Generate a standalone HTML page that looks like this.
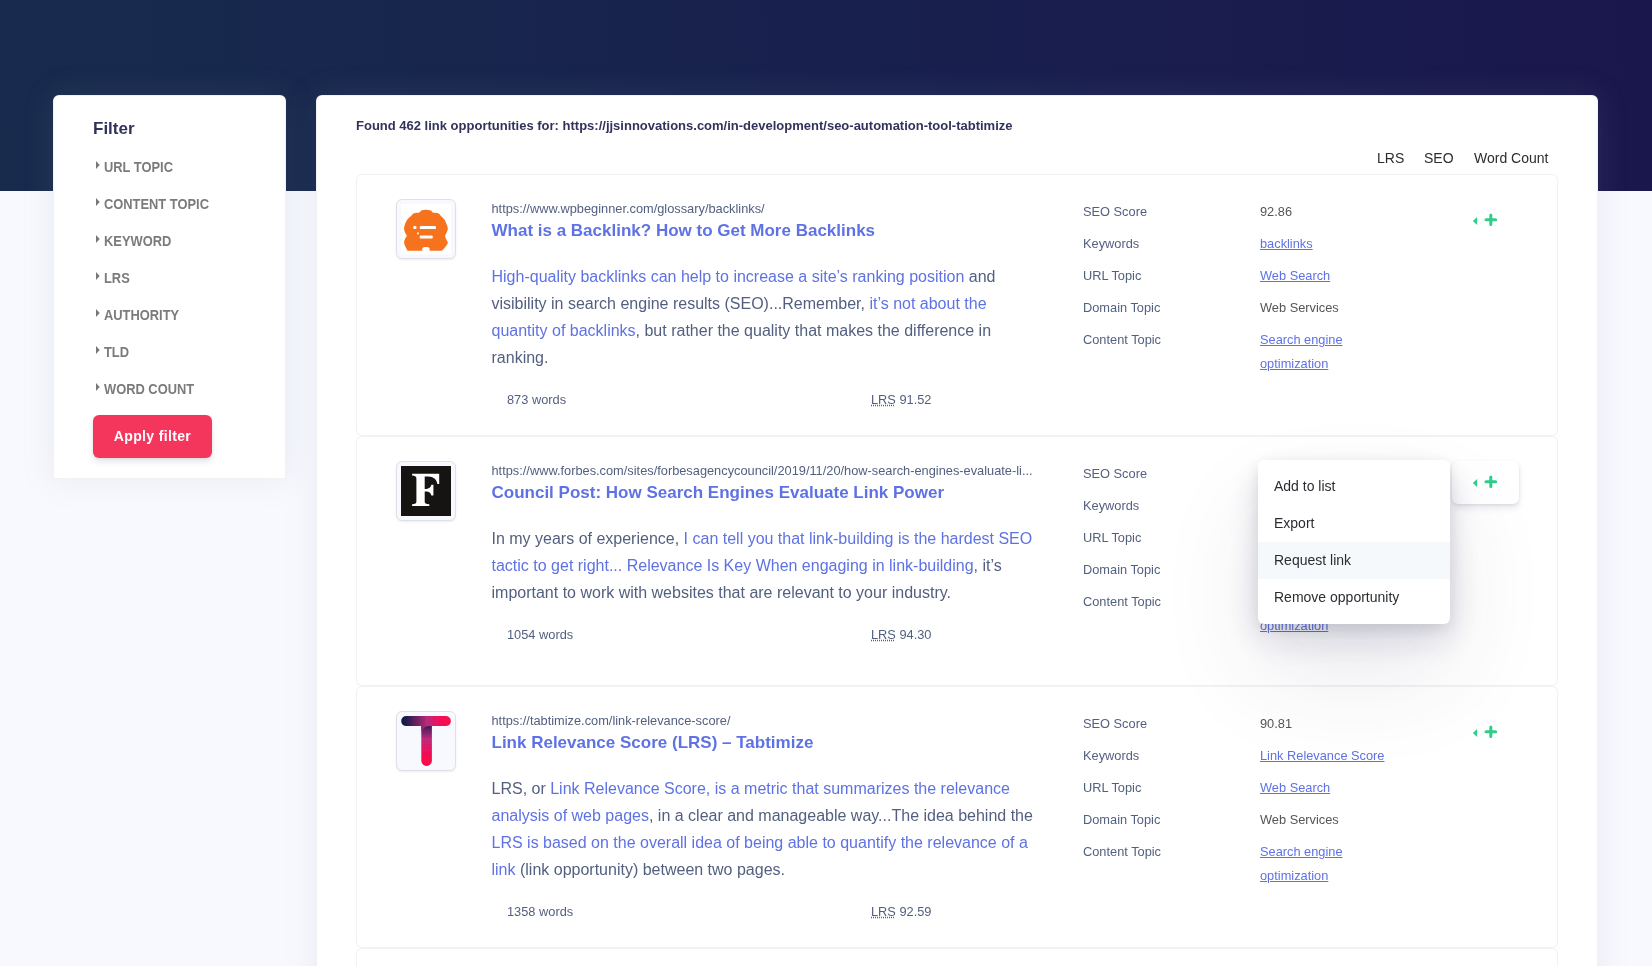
<!DOCTYPE html>
<html lang="en">
<head>
<meta charset="utf-8">
<title>Link opportunities</title>
<style>
*{box-sizing:border-box;margin:0;padding:0}
html,body{width:1652px;height:966px;overflow:hidden}
body{font-family:"Liberation Sans",sans-serif;background:#f8f9fe;color:#525f7f;position:relative;font-size:16px}
a{color:#5e72e4;text-decoration:none}
#wrap{position:absolute;left:0;top:0;width:1652px;height:966px;overflow:hidden;will-change:transform}
.abs{position:absolute}
#hdr{position:absolute;left:0;top:0;width:1652px;height:191px;background:linear-gradient(87deg,#172b4d 0,#1a174d 100%)}
.card{position:absolute;background:#fff;border-radius:6px;box-shadow:inset 0 0 0 1px rgba(0,0,0,.05),0 0 32px 0 rgba(136,152,170,.15)}
#filter{left:53px;top:95px;width:233px;height:384px;border-radius:6px 6px 0 0}
#main{left:316px;top:95px;width:1282px;height:900px}
#ftitle{left:40px;top:24px;font-size:17px;font-weight:bold;color:#32325d;line-height:20px;white-space:nowrap}
.fi{position:absolute;left:43px;height:20px;line-height:20px;font-size:14px;font-weight:bold;color:#7b7b7b;white-space:nowrap;padding-left:8.7px;transform:scaleX(.92);transform-origin:0 0}
.fi:before{content:"";position:absolute;left:0;top:4px;border-left:4px solid #777;border-top:4px solid transparent;border-bottom:4px solid transparent}
#apply{left:40px;top:320px;width:119px;height:43px;border-radius:6px;background:#f5365c;color:#fff;font-weight:bold;font-size:14px;letter-spacing:.35px;line-height:43px;text-align:center;box-shadow:0 4px 6px rgba(50,50,93,.11),0 1px 3px rgba(0,0,0,.08)}
#found{left:40px;top:21px;font-size:13px;font-weight:bold;color:#32325d;line-height:20px;white-space:nowrap}
.sort{position:absolute;top:53px;font-size:14px;color:#2a2d31;line-height:20px;white-space:nowrap}
/* result rows */
.row{position:absolute;left:40px;width:1202px;background:#fff;border:1px solid rgba(0,0,0,.05);border-radius:6px}
.ico{position:absolute;left:39px;top:24px;width:60px;height:60px;border:1px solid #dee2e6;border-radius:6px;background:#f8f9fe;padding:4px;box-shadow:0 1px 2px rgba(0,0,0,.075)}
.ico .in{width:50px;height:50px;position:relative;overflow:hidden}
.url{position:absolute;left:134.5px;top:25px;font-size:12.8px;line-height:18px;color:#525f7f;white-space:nowrap}
.ttl{position:absolute;left:134.5px;top:44px;font-size:17px;line-height:24px;font-weight:bold;color:#5e72e4;white-space:nowrap}
.par{position:absolute;left:134.5px;top:88px;font-size:16px;line-height:27px;color:#525f7f;white-space:nowrap}
.par b{font-weight:normal;color:#5e72e4}
.wc{position:absolute;left:150px;font-size:12.8px;line-height:18px;color:#525f7f;white-space:nowrap}
.lrs{position:absolute;left:514px;font-size:12.8px;line-height:18px;color:#525f7f;white-space:nowrap}
.lrs u{text-decoration:underline dotted;text-underline-offset:1px}
.lab{position:absolute;left:726px;font-size:12.8px;line-height:20px;color:#525f7f;white-space:nowrap}
.val{position:absolute;left:903px;font-size:12.8px;line-height:24px;color:#555;white-space:nowrap}
.val a{text-decoration:underline}
.btn{position:absolute;left:1095px;top:24px;width:67px;height:43px;border-radius:6px}
.btn svg{position:absolute;left:0;top:0}
.btn.on{background:#fff;box-shadow:0 4px 6px rgba(50,50,93,.11),0 1px 3px rgba(0,0,0,.08)}
#dd{position:absolute;left:942px;top:365px;width:192px;height:164px;background:#fff;border-radius:6px;padding:8px 0;box-shadow:0 50px 100px rgba(50,50,93,.1),0 15px 35px rgba(50,50,93,.15),0 5px 15px rgba(0,0,0,.1);z-index:5}
#dd div{height:37px;line-height:37px;padding-left:16px;font-size:14px;color:#2a2d31;white-space:nowrap}
#dd div.hv{background:#f6f9fc}
</style>
</head>
<body>
<div id="wrap">
<div id="hdr"></div>

<div class="card" id="filter">
  <div class="abs" id="ftitle">Filter</div>
  <div class="fi" style="top:62px">URL TOPIC</div>
  <div class="fi" style="top:99px">CONTENT TOPIC</div>
  <div class="fi" style="top:136px">KEYWORD</div>
  <div class="fi" style="top:173px">LRS</div>
  <div class="fi" style="top:210px">AUTHORITY</div>
  <div class="fi" style="top:247px">TLD</div>
  <div class="fi" style="top:284px">WORD COUNT</div>
  <div class="abs" id="apply">Apply filter</div>
</div>

<div class="card" id="main">
  <div class="abs" id="found">Found 462 link opportunities for: https://jjsinnovations.com/in-development/seo-automation-tool-tabtimize</div>
  <div class="sort" style="left:1061px">LRS</div>
  <div class="sort" style="left:1108px">SEO</div>
  <div class="sort" style="left:1158px">Word Count</div>
  <!-- ROW 1 -->
  <div class="row" style="top:79px;height:262px">
    <div class="ico"><div class="in" style="background:#fff">
      <svg width="50" height="50" viewBox="0 0 50 50"><defs><filter id="bl" x="-10%" y="-10%" width="120%" height="120%"><feGaussianBlur stdDeviation="0.6"/></filter></defs>
      <g filter="url(#bl)"><path fill="#f6721f" d="M24.8 5.7C25.7 5.8 28.8 6.1 30.0 6.6C31.2 7.1 30.5 8.1 31.8 8.6C33.1 9.1 36.1 8.7 37.6 9.4C39.1 10.1 39.5 11.6 40.5 12.6C41.5 13.6 42.6 14.4 43.4 15.5C44.2 16.6 44.5 17.6 45.1 19.0C45.7 20.4 46.7 22.6 46.8 24.2C46.9 25.8 46.1 27.0 45.7 28.3C45.3 29.6 44.3 30.6 44.2 31.8C44.1 33.0 44.7 34.1 45.1 35.2C45.5 36.4 46.9 37.4 46.8 38.7C46.7 40.0 45.5 41.4 44.5 42.8C43.5 44.1 41.6 46.1 41.0 46.8L28.6 46.8L28.6 44.4C28 42.6 22 42.6 21.3 44.4L21.3 46.8L6.5 46.8C6.2 46.1 5.1 44.1 4.5 42.8C3.9 41.4 3.2 40.0 3.1 38.7C3.0 37.4 3.5 36.4 3.9 35.2C4.3 34.1 5.7 33.0 5.7 31.8C5.7 30.6 4.3 29.7 3.9 28.3C3.5 26.9 3.0 25.2 3.1 23.7C3.2 22.1 4.0 20.4 4.5 19.0C5.0 17.6 5.5 16.6 6.3 15.5C7.1 14.4 8.3 13.6 9.4 12.6C10.5 11.6 11.1 10.1 12.6 9.4C14.1 8.7 17.1 9.1 18.4 8.6C19.7 8.1 19.1 7.1 20.2 6.6C21.3 6.1 24.0 5.8 24.8 5.7Z"/>
      <rect x="12.2" y="21.9" width="3.3" height="3.2" rx="1" fill="#fff"/>
      <rect x="18.7" y="21.9" width="16.3" height="3.2" rx="1.2" fill="#fff"/>
      <circle cx="17" cy="29.4" r="1.1" fill="#fff" opacity=".8"/>
      <rect x="18.7" y="31.5" width="13.1" height="3" rx="1.2" fill="#fff"/></g></svg>
    </div></div>
    <div class="url">https://www.wpbeginner.com/glossary/backlinks/</div>
    <div class="ttl">What is a Backlink? How to Get More Backlinks</div>
    <div class="par"><b>High-quality backlinks can help to increase a site’s ranking position</b> and<br>visibility in search engine results (SEO)...Remember, <b>it’s not about the</b><br><b>quantity of backlinks</b>, but rather the quality that makes the difference in<br>ranking.</div>
    <div class="wc" style="top:216px">873 words</div>
    <div class="lrs" style="top:216px"><u>LRS</u> 91.52</div>
    <div class="lab" style="top:27px">SEO Score</div>
    <div class="lab" style="top:59px">Keywords</div>
    <div class="lab" style="top:91px">URL Topic</div>
    <div class="lab" style="top:123px">Domain Topic</div>
    <div class="lab" style="top:155px">Content Topic</div>
    <div class="val" style="top:25px">92.86</div>
    <div class="val" style="top:57px"><a>backlinks</a></div>
    <div class="val" style="top:89px"><a>Web Search</a></div>
    <div class="val" style="top:121px">Web Services</div>
    <div class="val" style="top:153px"><a>Search engine<br>optimization</a></div>
    <div class="btn"><svg width="67" height="43" viewBox="0 0 67 43"><path d="M25.1 18L25.1 25.9L20.9 22Z" fill="#2dce89"/><path d="M34 20.8H43.6M38.8 16V25.6" stroke="#2dce89" stroke-width="3" stroke-linecap="round" fill="none"/></svg></div>
  </div>
  <!-- ROW 2 -->
  <div class="row" style="top:341px;height:250px">
    <div class="ico"><div class="in" style="background:#161413">
      <svg width="50" height="50" viewBox="0 0 50 50"><path fill="#fff" d="M11.1 7.8H38.2V17.9H36.4C35.6 13.6 32.4 10.6 27.2 10.6H23.7V22.9H25.3C28 22.9 29.7 21.5 30.4 18.8H32.4V29.5H30.4C29.7 26.8 28 25.4 25.3 25.4H23.7V35.4C23.7 37.2 24.8 37.9 28.3 38.3V40.1H11.1V38.3C14.3 37.9 15.4 37.2 15.4 35.4V12.5C15.4 10.7 14.3 10 11.1 9.6Z"/></svg>
    </div></div>
    <div class="url">https://www.forbes.com/sites/forbesagencycouncil/2019/11/20/how-search-engines-evaluate-li...</div>
    <div class="ttl">Council Post: How Search Engines Evaluate Link Power</div>
    <div class="par">In my years of experience, <b>I can tell you that link-building is the hardest SEO</b><br><b>tactic to get right... Relevance Is Key When engaging in link-building</b>, it’s<br>important to work with websites that are relevant to your industry.</div>
    <div class="wc" style="top:189px">1054 words</div>
    <div class="lrs" style="top:189px"><u>LRS</u> 94.30</div>
    <div class="lab" style="top:27px">SEO Score</div>
    <div class="lab" style="top:59px">Keywords</div>
    <div class="lab" style="top:91px">URL Topic</div>
    <div class="lab" style="top:123px">Domain Topic</div>
    <div class="lab" style="top:155px">Content Topic</div>
    <div class="val" style="top:25px">91.20</div>
    <div class="val" style="top:57px"><a>link building</a></div>
    <div class="val" style="top:89px"><a>Web Search</a></div>
    <div class="val" style="top:121px">Business News</div>
    <div class="val" style="top:153px"><a>Search engine<br>optimization</a></div>
    <div class="btn on"><svg width="67" height="43" viewBox="0 0 67 43"><path d="M25.1 18L25.1 25.9L20.9 22Z" fill="#2dce89"/><path d="M34 20.8H43.6M38.8 16V25.6" stroke="#2dce89" stroke-width="3" stroke-linecap="round" fill="none"/></svg></div>
  </div>
  <!-- ROW 3 -->
  <div class="row" style="top:591px;height:262px">
    <div class="ico"><div class="in">
      <svg width="50" height="50" viewBox="0 0 50 50"><defs>
        <linearGradient id="tg1" x1="0" y1="0" x2="1" y2="0"><stop offset="0.04" stop-color="#0b1a4a"/><stop offset="0.3" stop-color="#66225f"/><stop offset="0.52" stop-color="#b92a7b"/><stop offset="0.75" stop-color="#ef105a"/><stop offset="1" stop-color="#ff0a47"/></linearGradient>
        <linearGradient id="tg2" x1="0" y1="0" x2="0" y2="1"><stop offset="0" stop-color="#1c1a50"/><stop offset="0.18" stop-color="#5a2062"/><stop offset="0.4" stop-color="#bf2a7a"/><stop offset="0.7" stop-color="#ee1058"/><stop offset="1" stop-color="#ff0544"/></linearGradient>
        <filter id="bl3" x="-10%" y="-10%" width="120%" height="120%"><feGaussianBlur stdDeviation="0.35"/></filter></defs>
        <g filter="url(#bl3)"><rect x="20.3" y="5" width="10.6" height="44.9" rx="5.3" fill="url(#tg2)"/>
        <path d="M5.2 0.1H44.9A5 5 0 0 1 44.9 10.1H28C24 10.3 22.5 12 21.5 15L20.3 15L20.3 10.1H5.2A5 5 0 0 1 5.2 0.1Z" fill="url(#tg1)"/></g></svg>
    </div></div>
    <div class="url">https://tabtimize.com/link-relevance-score/</div>
    <div class="ttl">Link Relevance Score (LRS) – Tabtimize</div>
    <div class="par">LRS, or <b>Link Relevance Score, is a metric that summarizes the relevance</b><br><b>analysis of web pages</b>, in a clear and manageable way...The idea behind the<br><b>LRS is based on the overall idea of being able to quantify the relevance of a</b><br><b>link</b> (link opportunity) between two pages.</div>
    <div class="wc" style="top:216px">1358 words</div>
    <div class="lrs" style="top:216px"><u>LRS</u> 92.59</div>
    <div class="lab" style="top:27px">SEO Score</div>
    <div class="lab" style="top:59px">Keywords</div>
    <div class="lab" style="top:91px">URL Topic</div>
    <div class="lab" style="top:123px">Domain Topic</div>
    <div class="lab" style="top:155px">Content Topic</div>
    <div class="val" style="top:25px">90.81</div>
    <div class="val" style="top:57px"><a>Link Relevance Score</a></div>
    <div class="val" style="top:89px"><a>Web Search</a></div>
    <div class="val" style="top:121px">Web Services</div>
    <div class="val" style="top:153px"><a>Search engine<br>optimization</a></div>
    <div class="btn"><svg width="67" height="43" viewBox="0 0 67 43"><path d="M25.1 18L25.1 25.9L20.9 22Z" fill="#2dce89"/><path d="M34 20.8H43.6M38.8 16V25.6" stroke="#2dce89" stroke-width="3" stroke-linecap="round" fill="none"/></svg></div>
  </div>
  <!-- ROW 4 (clipped) -->
  <div class="row" style="top:853px;height:262px"></div>
  <!-- DROPDOWN -->
  <div id="dd"><div>Add to list</div><div>Export</div><div class="hv">Request link</div><div>Remove opportunity</div></div>
</div>
</div>
</body>
</html>
